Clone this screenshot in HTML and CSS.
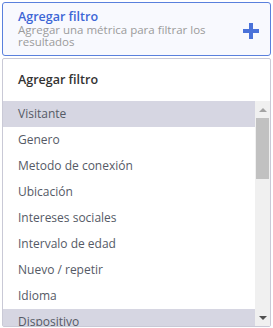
FILE: index.html
```html
<!DOCTYPE html>
<html lang="es">
<head>
<meta charset="utf-8">
<link rel="stylesheet" href="styles.css">
</head>
<body>
<div class="page">
  <div class="filter-box">
    <div class="filter-text">
      <div class="filter-title">Agregar filtro</div>
      <div class="filter-sub">Agregar una métrica para filtrar los resultados</div>
    </div>
    <svg class="plus" width="16" height="16" viewBox="0 0 16 16"><rect x="6" y="0" width="4" height="16" fill="#4a72d9"/><rect x="0" y="6" width="16" height="4" fill="#4a72d9"/></svg>
  </div>
  <div class="panel">
    <div class="panel-head">Agregar filtro</div>
    <div class="panel-body">
      <ul class="options">
        <li class="opt sel">Visitante</li>
        <li class="opt">Genero</li>
        <li class="opt">Metodo de conexión</li>
        <li class="opt">Ubicación</li>
        <li class="opt">Intereses sociales</li>
        <li class="opt">Intervalo de edad</li>
        <li class="opt">Nuevo / repetir</li>
        <li class="opt">Idioma</li>
        <li class="opt sel">Dispositivo</li>
      </ul>
      <div class="scrollbar">
        <div class="arrow up"></div>
        <div class="track"><div class="thumb"></div></div>
        <div class="arrow down"></div>
      </div>
    </div>
  </div>
</div>
</body>
</html>
```
FILE: styles.css
```css
html, body {
  margin: 0;
  padding: 0;
  background: #ffffff;
}
body {
  font-family: "Open Sans", "Noto Sans", sans-serif;
}
.page {
  padding: 2px 2px 0 2px;
  display: flex;
  flex-direction: column;
}
.filter-box {
  box-sizing: border-box;
  height: 54px;
  border: 1px solid #5a80dd;
  border-radius: 3px;
  background: #f8f9fe;
  display: flex;
  align-items: center;
  padding: 0 11px 0 15px;
}
.filter-text {
  flex: 1;
  padding-top: 0;
}
.filter-title {
  color: #3d66d6;
  font-size: 12.5px;
  font-weight: 600;
  line-height: 14px;
}
.filter-sub {
  color: #9b9b9b;
  font-size: 11.5px;
  line-height: 12px;
  width: 200px;
}
.plus {
  display: block;
  margin-top: 3px;
}
.panel {
  margin-top: 2px;
  width: 269px;
  box-sizing: border-box;
  height: 269px;
  border: 1px solid #c9c9d6;
  border-radius: 2px;
  background: #fff;
  display: flex;
  flex-direction: column;
}
.panel-head {
  height: 42px;
  box-sizing: border-box;
  padding: 12px 0 0 15px;
  font-size: 12.5px;
  font-weight: 600;
  color: #333;
}
.panel-body {
  flex: 1;
  display: flex;
  overflow: hidden;
}
.options {
  list-style: none;
  margin: 0;
  padding: 0;
  flex: 1;
  overflow: hidden;
}
.opt {
  height: 26px;
  line-height: 26px;
  padding-left: 15px;
  font-size: 12px;
  color: #555a66;
}
.opt.sel {
  background: #d6d6e2;
}
.scrollbar {
  width: 15px;
  background: #f0f0f0;
  display: flex;
  flex-direction: column;
}
.arrow {
  height: 17px;
  display: flex;
  align-items: center;
  justify-content: center;
}
.arrow::before {
  content: "";
  width: 0;
  height: 0;
  border-left: 4px solid transparent;
  border-right: 4px solid transparent;
}
.arrow.up::before {
  border-bottom: 4px solid #a3a3a3;
}
.arrow.down::before {
  border-top: 4px solid #505050;
}
.track {
  flex: 1;
  padding: 0 1px;
}
.thumb {
  height: 61px;
  background: #c1c1c1;
}
```
